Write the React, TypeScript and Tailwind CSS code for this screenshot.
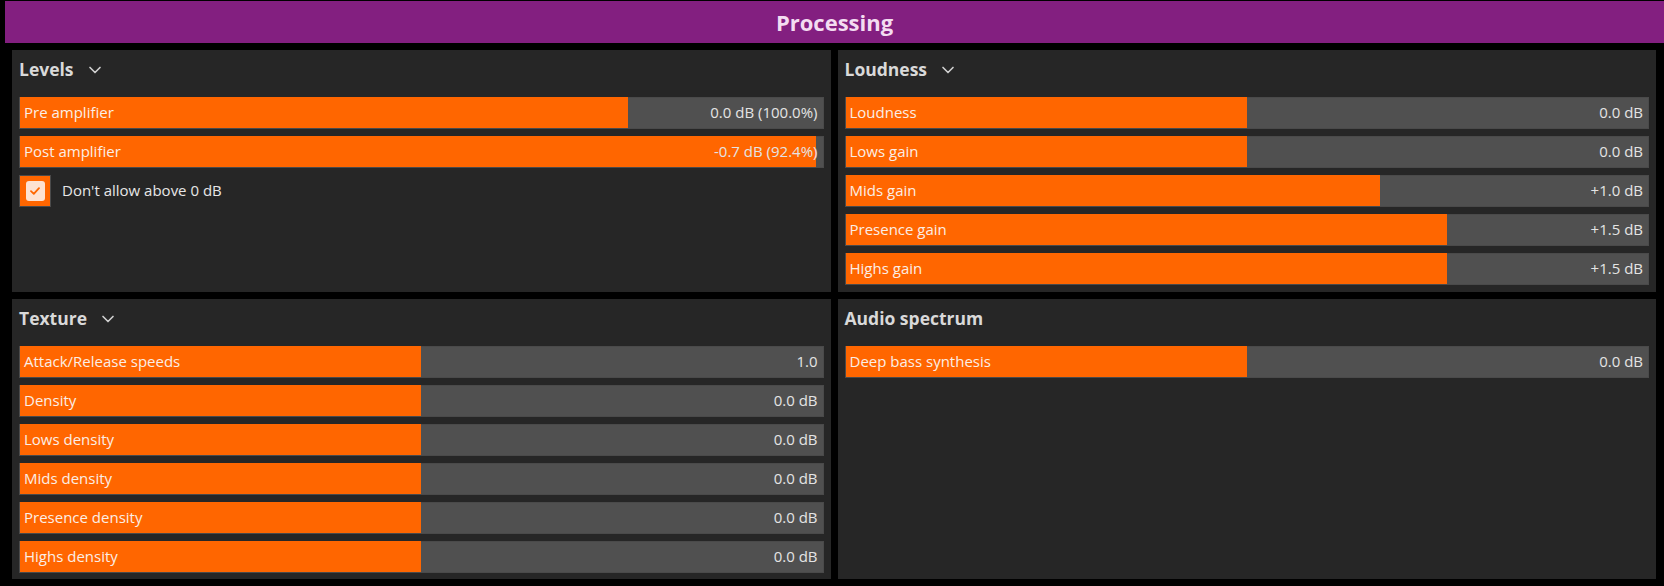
import { ChevronDown } from 'lucide-react'

type Row = { label: string; value: string; pct: number }

const levels: Row[] = [
    { label: 'Pre amplifier', value: '0.0 dB (100.0%)', pct: 75.75 },
    { label: 'Post amplifier', value: '-0.7 dB (92.4%)', pct: 99.25 },
]

const loudness: Row[] = [
    { label: 'Loudness', value: '0.0 dB', pct: 50 },
    { label: 'Lows gain', value: '0.0 dB', pct: 50 },
    { label: 'Mids gain', value: '+1.0 dB', pct: 66.6 },
    { label: 'Presence gain', value: '+1.5 dB', pct: 75 },
    { label: 'Highs gain', value: '+1.5 dB', pct: 75 },
]

const texture: Row[] = [
    { label: 'Attack/Release speeds', value: '1.0', pct: 50 },
    { label: 'Density', value: '0.0 dB', pct: 50 },
    { label: 'Lows density', value: '0.0 dB', pct: 50 },
    { label: 'Mids density', value: '0.0 dB', pct: 50 },
    { label: 'Presence density', value: '0.0 dB', pct: 50 },
    { label: 'Highs density', value: '0.0 dB', pct: 50 },
]

const spectrum: Row[] = [
    { label: 'Deep bass synthesis', value: '0.0 dB', pct: 50 },
]

function Slider({ row }: { row: Row }) {
    return (
        <div className="relative h-[32px] border border-[#4a4a4a] bg-[#505050]">
            {/*Fill*/}
            <div className="absolute left-0 top-[-1px] bottom-0 bg-[#ff6600]" style={{ width: `${row.pct}%` }} />
            <div className="relative flex h-full items-center justify-between pb-[2px] pl-[4px] pr-[5px] text-[15px]">
                <span className="text-[#fbeee6]">{row.label}</span>
                <span className="text-[#e4e4e4]">{row.value}</span>
            </div>
        </div>
    )
}

function Panel({ title, chevron = true, rows, children }: { title: string; chevron?: boolean; rows: Row[]; children?: React.ReactNode }) {
    return (
        <div className="flex flex-col gap-[7px] bg-[#262626] px-[7px]">
            <div className="flex h-[40px] items-center gap-[11px] pb-[1px]">
                <span className="text-[17.5px] font-bold text-[#d9d9d9]">{title}</span>
                {chevron && <ChevronDown size={20} strokeWidth={2} className="text-[#d0d0d0]" />}
            </div>
            {rows.map((r) => (
                <Slider key={r.label} row={r} />
            ))}
            {children}
        </div>
    )
}

export default function App() {
    return (
        <div
            className="flex h-[586px] w-[1664px] flex-col bg-black"
            style={{ fontFamily: '"Open Sans", "Noto Sans", "Liberation Sans", sans-serif' }}
        >
            {/*Header*/}
            <div className="ml-[5px] mt-[1px] flex h-[42px] items-center justify-center bg-[#831f80]">
                <span className="text-[22px] font-bold text-[#f3dcf1]">Processing</span>
            </div>

            {/*Panels*/}
            <div className="grid flex-1 grid-cols-2 grid-rows-[242px_1fr] gap-[7px] pb-[7px] pl-[12px] pr-[8px] pt-[7px]">
                <Panel title="Levels" rows={levels}>
                    <div className="flex h-[32px] items-center gap-[11px]">
                        <div className="flex h-[32px] w-[32px] items-center justify-center border border-[#4a4a4a] bg-[#ff6600]">
                            <div className="flex h-[20px] w-[19px] items-center justify-center rounded-[3px] bg-[#fde2d2]">
                                <svg width="10" height="8" viewBox="0 0 10 8" fill="none">
                                    <path d="M1 4.2 L3.8 6.8 L9 1.2" stroke="#ff6600" strokeWidth="1.8" strokeLinecap="round" strokeLinejoin="round" />
                                </svg>
                            </div>
                        </div>
                        <span className="pb-[2px] text-[15px] text-[#e6e6e6]">Don't allow above 0 dB</span>
                    </div>
                </Panel>
                <Panel title="Loudness" rows={loudness} />
                <Panel title="Texture" rows={texture} />
                <Panel title="Audio spectrum" chevron={false} rows={spectrum} />
            </div>
        </div>
    )
}
